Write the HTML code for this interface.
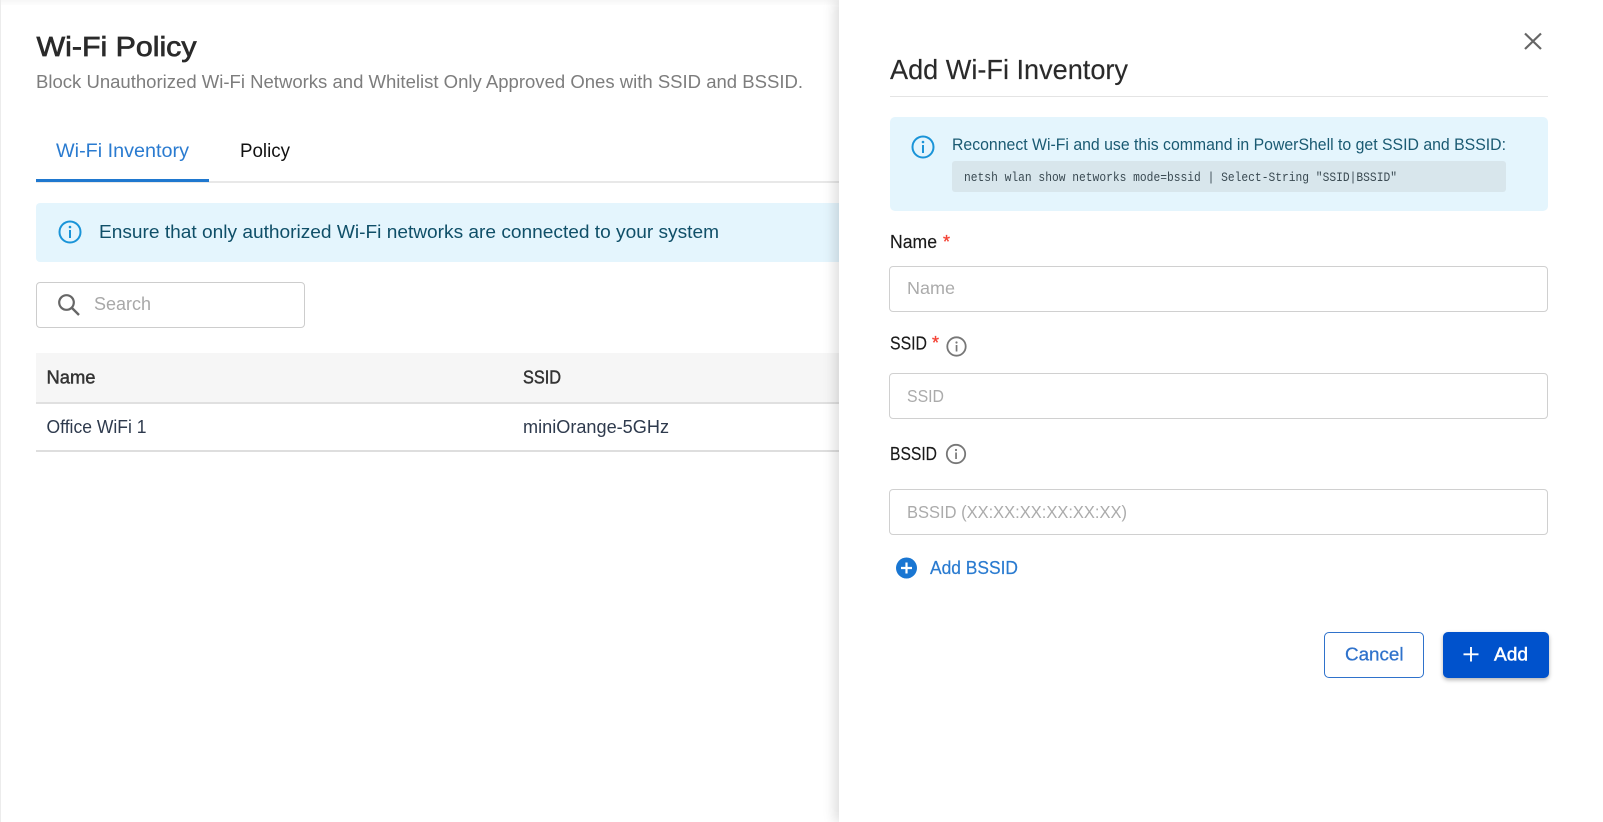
<!DOCTYPE html>
<html lang="en">
<head>
<meta charset="utf-8">
<title>Wi-Fi Policy</title>
<style>
html,body{margin:0;padding:0;width:1603px;height:822px;overflow:hidden;background:#fff;}
body{position:relative;font-family:"Liberation Sans",sans-serif;}
.b{position:absolute;box-sizing:border-box;}
svg{position:absolute;left:0;top:0;filter:blur(.3px);}
text{font-family:"Liberation Sans",sans-serif;}
.m{stroke-width:.45px;paint-order:stroke;}
</style>
</head>
<body>
<div class="b" style="left:0;top:0;width:1603px;height:5px;background:linear-gradient(#f6f6f6,#fdfdfd);"></div>
<div class="b" style="left:0;top:0;width:1px;height:822px;background:#ececec;"></div>

<!-- left page -->
<div class="b" style="left:36px;top:181px;width:810px;height:2px;background:#e8e8e8;"></div>
<div class="b" style="left:36px;top:179px;width:173px;height:3px;background:#1f78cf;"></div>
<div class="b" style="left:36px;top:203px;width:810px;height:59px;background:#e4f5fd;border-radius:4px;"></div>
<div class="b" style="left:36px;top:282px;width:269px;height:46px;border:1px solid #cdcdcd;border-radius:4px;background:#fff;"></div>
<div class="b" style="left:36px;top:353px;width:810px;height:51px;background:#f6f6f6;border-bottom:2px solid #e0e0e0;"></div>
<div class="b" style="left:36px;top:450px;width:810px;height:1.500px;background:#dedede;"></div>

<!-- drawer -->
<div class="b" style="left:838.500px;top:0;width:765px;height:822px;background:#fff;box-shadow:-4px 0 12px rgba(0,0,0,.14);"></div>
<div class="b" style="left:890px;top:95.500px;width:658px;height:1px;background:#e4e4e4;"></div>
<div class="b" style="left:890px;top:117px;width:658px;height:94px;background:#e4f5fd;border-radius:5px;"></div>
<div class="b" style="left:952px;top:161px;width:554px;height:31px;background:#d8e6ec;border-radius:3px;"></div>
<div class="b" style="left:889px;top:266px;width:659px;height:46px;border:1.300px solid #d0d0d0;border-radius:4px;"></div>
<div class="b" style="left:889px;top:373px;width:659px;height:46px;border:1.300px solid #d0d0d0;border-radius:4px;"></div>
<div class="b" style="left:889px;top:489px;width:659px;height:46px;border:1.300px solid #d0d0d0;border-radius:4px;"></div>
<div class="b" style="left:1324px;top:632px;width:99.500px;height:46px;border:1.300px solid #2f72cb;border-radius:5px;background:#fff;"></div>
<div class="b" style="left:1443px;top:632px;width:105.500px;height:46px;background:#0052cc;border-radius:5px;box-shadow:0 2px 4px rgba(0,0,0,.3);"></div>

<svg width="1603" height="822" viewBox="0 0 1603 822" xmlns="http://www.w3.org/2000/svg">
  <!-- left text -->
  <text x="36.500" y="56" font-size="28" fill="#2a2a2a" stroke="#2a2a2a" stroke-width=".7" paint-order="stroke" textLength="160" lengthAdjust="spacingAndGlyphs">Wi-Fi Policy</text>
  <text x="36" y="88" font-size="18" fill="#7d7d7d" textLength="767" lengthAdjust="spacingAndGlyphs">Block Unauthorized Wi-Fi Networks and Whitelist Only Approved Ones with SSID and BSSID.</text>
  <text x="56" y="157" font-size="19" fill="#2a7bd0" textLength="133" lengthAdjust="spacingAndGlyphs">Wi-Fi Inventory</text>
  <text x="240" y="157" font-size="19" fill="#111" textLength="50" lengthAdjust="spacingAndGlyphs">Policy</text>

  <circle cx="70" cy="232" r="10.500" fill="none" stroke="#1a94d8" stroke-width="2"/>
  <circle cx="70" cy="227" r="1.300" fill="#1a94d8"/>
  <rect x="69" y="230" width="2" height="8" fill="#1a94d8"/>
  <text x="99" y="238" font-size="18.500" fill="#0f4f68" textLength="620" lengthAdjust="spacingAndGlyphs">Ensure that only authorized Wi-Fi networks are connected to your system</text>

  <circle cx="66.500" cy="302.500" r="7.300" fill="none" stroke="#666" stroke-width="2.200"/>
  <line x1="72" y1="308" x2="79" y2="315" stroke="#666" stroke-width="2.400"/>
  <text x="94" y="310" font-size="18" fill="#a8a8a8" textLength="57" lengthAdjust="spacingAndGlyphs">Search</text>

  <text class="m" x="46.500" y="383.500" font-size="18" fill="#333" stroke="#333" textLength="49" lengthAdjust="spacingAndGlyphs">Name</text>
  <text class="m" x="523" y="383.500" font-size="18" fill="#333" stroke="#333" textLength="38" lengthAdjust="spacingAndGlyphs">SSID</text>
  <text x="46.500" y="433" font-size="18" fill="#2e3a4d" textLength="100" lengthAdjust="spacingAndGlyphs">Office WiFi 1</text>
  <text x="523" y="433" font-size="18" fill="#2e3a4d" textLength="146" lengthAdjust="spacingAndGlyphs">miniOrange-5GHz</text>

  <!-- drawer header -->
  <path d="M1525 33.500L1541 49M1541 33.500L1525 49" stroke="#666" stroke-width="2.200" fill="none"/>
  <text x="890" y="79" font-size="28" fill="#2a2a2a" stroke="#2a2a2a" stroke-width=".15" textLength="238" lengthAdjust="spacingAndGlyphs">Add Wi-Fi Inventory</text>

  <circle cx="923" cy="147" r="10.500" fill="none" stroke="#1a94d8" stroke-width="2"/>
  <circle cx="923" cy="142" r="1.300" fill="#1a94d8"/>
  <rect x="922" y="145" width="2" height="8" fill="#1a94d8"/>
  <text x="952" y="150" font-size="16.500" fill="#1a5a72" textLength="554" lengthAdjust="spacingAndGlyphs">Reconnect Wi-Fi and use this command in PowerShell to get SSID and BSSID:</text>
  <text x="964" y="181" font-size="13" fill="#3a4a52" style="font-family:'Liberation Mono',monospace" textLength="433" lengthAdjust="spacingAndGlyphs">netsh wlan show networks mode=bssid | Select-String "SSID|BSSID"</text>

  <!-- form -->
  <text x="890" y="248" font-size="18" fill="#1a1a1a" stroke="#1a1a1a" stroke-width=".15" textLength="47" lengthAdjust="spacingAndGlyphs">Name</text>
  <text x="943" y="248" font-size="18" fill="#f44336" stroke="#f44336" stroke-width=".3">*</text>
  <text x="907" y="294" font-size="17.500" fill="#ababab" textLength="48" lengthAdjust="spacingAndGlyphs">Name</text>

  <text x="890" y="349.500" font-size="18" fill="#1a1a1a" stroke="#1a1a1a" stroke-width=".15" textLength="37" lengthAdjust="spacingAndGlyphs">SSID</text>
  <text x="932" y="349" font-size="18" fill="#f44336" stroke="#f44336" stroke-width=".3">*</text>
  <circle cx="956.500" cy="346.500" r="9.200" fill="none" stroke="#777" stroke-width="1.800"/>
  <circle cx="956.500" cy="342.500" r="1.100" fill="#777"/>
  <rect x="955.700" y="345" width="1.700" height="6.500" fill="#777"/>
  <text x="907" y="402" font-size="17.500" fill="#ababab" textLength="37" lengthAdjust="spacingAndGlyphs">SSID</text>

  <text x="890" y="460" font-size="18" fill="#1a1a1a" stroke="#1a1a1a" stroke-width=".15" textLength="47" lengthAdjust="spacingAndGlyphs">BSSID</text>
  <circle cx="956" cy="454" r="9.200" fill="none" stroke="#777" stroke-width="1.800"/>
  <circle cx="956" cy="450" r="1.100" fill="#777"/>
  <rect x="955.200" y="452.500" width="1.700" height="6.500" fill="#777"/>
  <text x="907" y="518" font-size="17.500" fill="#ababab" textLength="220" lengthAdjust="spacingAndGlyphs">BSSID (XX:XX:XX:XX:XX:XX)</text>

  <circle cx="906.500" cy="568" r="10.500" fill="#1976d2"/>
  <path d="M906.500 562.500V573.500M901 568H912" stroke="#fff" stroke-width="2.200"/>
  <text x="930" y="574" font-size="18" fill="#2a7bd0" stroke="#2a7bd0" stroke-width=".2" textLength="88" lengthAdjust="spacingAndGlyphs">Add BSSID</text>

  <text x="1345" y="660.500" font-size="18" fill="#2f72cb" stroke="#2f72cb" stroke-width=".25" textLength="58.500" lengthAdjust="spacingAndGlyphs">Cancel</text>
  <path d="M1471 647V661.500M1463.500 654.300H1478.500" stroke="#fff" stroke-width="1.900"/>
  <text class="m" x="1494" y="660.500" font-size="18" fill="#fff" stroke="#fff" textLength="34" lengthAdjust="spacingAndGlyphs">Add</text>
</svg>
</body>
</html>
